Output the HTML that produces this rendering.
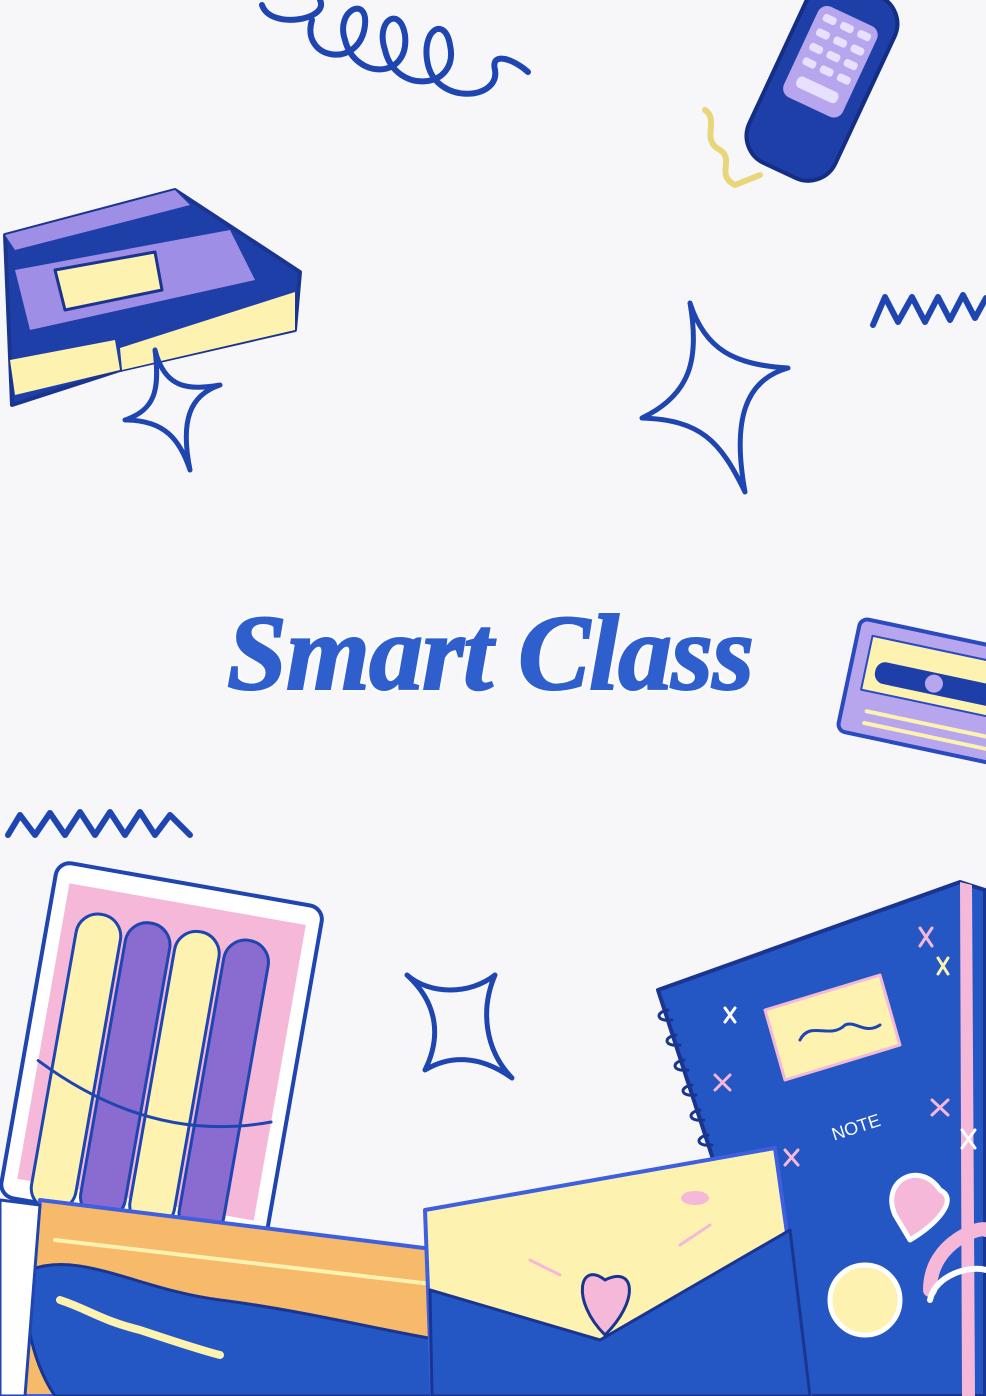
<!DOCTYPE html>
<html><head><meta charset="utf-8"><style>
html,body{margin:0;padding:0;background:#f7f7fa;}
#w{position:relative;width:986px;height:1396px;overflow:hidden;background:#f7f7fa;}
svg{position:absolute;left:0;top:0}
.t{position:absolute;left:205px;top:592px;width:570px;text-align:center;font-family:"Liberation Serif",serif;font-style:italic;font-weight:bold;font-size:108px;color:#2f5fcc;letter-spacing:-1px;-webkit-text-stroke:2px #2f5fcc;text-shadow:0 0 6px #fff,0 0 6px #fff,0 0 8px #fff;}
</style></head><body><div id="w">
<svg width="986" height="1396" viewBox="0 0 986 1396" fill="none" stroke-linecap="round" stroke-linejoin="round">
<path d="M262 5 C270 30 330 20 320 0 M312 20 C300 60 360 70 365 25 C368 -5 335 10 345 40 C355 80 410 80 405 35 C400 5 375 20 385 50 C395 95 460 90 450 45 C445 15 420 30 428 65 C438 105 500 100 495 70 C490 50 515 60 528 72" stroke="#1f46b0" stroke-width="6"/>
<g transform="rotate(25 820 90)">
<rect x="770" y="-20" width="95" height="200" rx="30" fill="#1f3fa8" stroke="#142e85" stroke-width="4"/>
<rect x="785" y="10" width="65" height="100" rx="10" fill="#b7a6ee"/>
<g fill="#e8e0ff"><rect x="792" y="18" width="14" height="8" rx="3"/><rect x="811" y="18" width="14" height="8" rx="3"/><rect x="830" y="18" width="14" height="8" rx="3"/><rect x="792" y="34" width="14" height="8" rx="3"/><rect x="811" y="34" width="14" height="8" rx="3"/><rect x="830" y="34" width="14" height="8" rx="3"/><rect x="792" y="50" width="14" height="8" rx="3"/><rect x="811" y="50" width="14" height="8" rx="3"/><rect x="830" y="50" width="14" height="8" rx="3"/><rect x="792" y="66" width="14" height="8" rx="3"/><rect x="811" y="66" width="14" height="8" rx="3"/><rect x="830" y="66" width="14" height="8" rx="3"/><rect x="795" y="85" width="45" height="12" rx="5"/></g>
</g>
<path d="M705 110 C720 120 700 140 720 150 C735 160 715 175 735 185 L760 175" stroke="#e8d77a" stroke-width="6"/>
<path d="M5 235 L175 190 L300 272 L295 330 L120 370 L12 405 Z" fill="#1f3fa8" stroke="#1a3590" stroke-width="4"/>
<path d="M5 235 L175 190 L190 205 L15 250 Z" fill="#9f8ee6"/>
<path d="M120 348 L295 292 L295 330 L122 370 Z" fill="#fdf2b0"/>
<path d="M15 270 L230 230 L255 280 L30 330 Z" fill="#9f8ee6"/>
<path d="M55 270 L155 252 L162 290 L65 310 Z" fill="#fdf2b0" stroke="#1a3590" stroke-width="3"/>
<path d="M10 360 L115 340 L120 370 L15 395 Z" fill="#fdf2b0"/>
<path d="M155 350 C165 390 190 390 220 385 C190 395 180 420 190 470 C180 440 165 420 125 420 C155 410 160 390 155 350 Z" stroke="#1f46b0" stroke-width="5"/>
<path d="M690 303 C705 350 735 365 788 368 C745 380 732 420 745 492 C720 440 700 420 642 418 C690 395 700 360 690 303 Z" stroke="#1f46b0" stroke-width="5"/>
<path d="M407 975 C430 995 470 995 495 975 C480 1010 485 1050 512 1078 C480 1055 450 1055 425 1070 C440 1040 440 1005 407 975 Z" stroke="#1f46b0" stroke-width="5"/>
<path d="M873 325 L885 297 L898 322 L912 297 L925 322 L938 297 L950 320 L963 295 L975 318 L986 298" stroke="#1f46b0" stroke-width="6"/>
<path d="M8 835 L20 815 L35 835 L50 813 L65 835 L80 812 L95 835 L110 812 L125 835 L140 812 L155 835 L170 815 L190 835" stroke="#1f46b0" stroke-width="6"/>
<g transform="rotate(12 910 700)">
<rect x="845" y="630" width="170" height="115" rx="8" fill="#b7a6ee" stroke="#2a4bc0" stroke-width="4"/>
<rect x="860" y="645" width="150" height="55" fill="#fdf2b0" stroke="#2a4bc0" stroke-width="2"/>
<rect x="870" y="668" width="130" height="22" rx="10" fill="#1f3fa8"/>
<circle cx="930" cy="679" r="9" fill="#b7a6ee"/>
<path d="M870 720 L1005 720 M870 732 L1005 732" stroke="#fdf2b0" stroke-width="4"/>
</g>
<g transform="rotate(10 150 1060)">
<rect x="25" y="880" width="270" height="340" rx="14" fill="#fff" stroke="#1f46b0" stroke-width="4"/>
<rect x="40" y="900" width="240" height="300" fill="#f5b8d8"/>
<rect x="55" y="925" width="45" height="300" rx="22" fill="#fdf2b0" stroke="#1f46b0" stroke-width="3"/>
<rect x="105" y="925" width="45" height="300" rx="22" fill="#8a6bd0" stroke="#1f46b0" stroke-width="3"/>
<rect x="155" y="925" width="45" height="300" rx="22" fill="#fdf2b0" stroke="#1f46b0" stroke-width="3"/>
<rect x="205" y="925" width="45" height="300" rx="22" fill="#8a6bd0" stroke="#1f46b0" stroke-width="3"/>
<path d="M40 1080 C120 1120 200 1130 280 1100" stroke="#1f46b0" stroke-width="3"/>
</g>
<path d="M40 1200 L440 1250 L440 1396 L20 1396 Z" fill="#f7b96a" stroke="#3d5fe0" stroke-width="4"/>
<path d="M55 1240 L440 1285" stroke="#fdf2b0" stroke-width="4"/>
<path d="M30 1270 C80 1250 140 1290 220 1300 C300 1310 380 1330 440 1340 L440 1396 L55 1396 C30 1360 20 1300 30 1270 Z" fill="#2456c4" stroke="#1a3590" stroke-width="3"/>
<path d="M60 1300 C90 1310 100 1320 140 1330 C170 1340 200 1350 220 1355" stroke="#fdf2b0" stroke-width="8"/>
<path d="M0 1200 L40 1205 L25 1396 L0 1396 Z" fill="#fff" stroke="#1f46b0" stroke-width="3"/>
<path d="M658 990 L960 882 L985 890 L985 1396 L790 1396 Z" fill="#2456c4" stroke="#1a3590" stroke-width="4"/>
<path d="M960 882 L972 885 L975 1396 L962 1396 Z" fill="#f5b8d8"/>
<g stroke="#1a3590" stroke-width="3"><path d="M668 1010 C655 1012 656 1022 672 1020 M676 1035 C663 1037 664 1047 680 1045 M684 1060 C671 1062 672 1072 688 1070 M692 1085 C679 1087 680 1097 696 1095 M700 1110 C687 1112 688 1122 704 1120 M708 1135 C695 1137 696 1147 712 1145"/></g>
<g stroke-width="3"><path d="M725 1008 L735 1022 M735 1008 L725 1022" stroke="#fff"/><path d="M715 1075 L730 1090 M730 1075 L715 1090" stroke="#f5b8d8"/><path d="M920 928 L932 946 M932 928 L920 946" stroke="#f5b8d8"/><path d="M938 958 L948 974 M948 958 L938 974" stroke="#fdf2b0"/><path d="M932 1100 L948 1115 M948 1100 L932 1115" stroke="#f5b8d8"/><path d="M962 1130 L975 1148 M975 1130 L962 1148" stroke="#fff"/><path d="M785 1150 L798 1165 M798 1150 L785 1165" stroke="#f5b8d8"/></g>
<path d="M765 1010 L880 975 L900 1045 L785 1080 Z" fill="#fdf2b0" stroke="#f5b8d8" stroke-width="3"/>
<path d="M800 1040 C810 1020 830 1040 845 1025 C855 1020 865 1035 880 1025" stroke="#1f46b0" stroke-width="3"/>
<text x="830" y="1135" fill="#fff" font-family="Liberation Sans,sans-serif" font-size="18" transform="rotate(-18 850 1125)">NOTE</text>
<path d="M940 1190 C920 1160 880 1180 895 1215 L910 1240 C935 1225 960 1200 940 1190 Z" fill="#f5b8d8" stroke="#fff" stroke-width="5"/>
<circle cx="865" cy="1300" r="35" fill="#fdf2b0" stroke="#fff" stroke-width="5"/>
<path d="M930 1290 C930 1240 985 1225 986 1230" stroke="#f5b8d8" stroke-width="14"/>
<path d="M930 1300 C935 1275 970 1265 986 1270" stroke="#fff" stroke-width="6"/>
<path d="M425 1210 L775 1148 L810 1396 L432 1396 Z" fill="#fdf2b0" stroke="#3d5fe0" stroke-width="4"/>
<path d="M430 1290 L600 1340 L790 1230 L810 1396 L432 1396 Z" fill="#2456c4" stroke="#1a3590" stroke-width="3"/>
<path d="M530 1260 L560 1275 M680 1245 L710 1225" stroke="#f5b8d8" stroke-width="3"/>
<path d="M605 1280 C580 1260 570 1300 605 1335 C640 1300 635 1265 605 1280 Z" fill="#f5b8d8" stroke="#1a3590" stroke-width="3"/>
<ellipse cx="695" cy="1198" rx="14" ry="7" fill="#f5b8d8"/>
</svg>
<div class="t">Smart Class</div>
</div></body></html>
